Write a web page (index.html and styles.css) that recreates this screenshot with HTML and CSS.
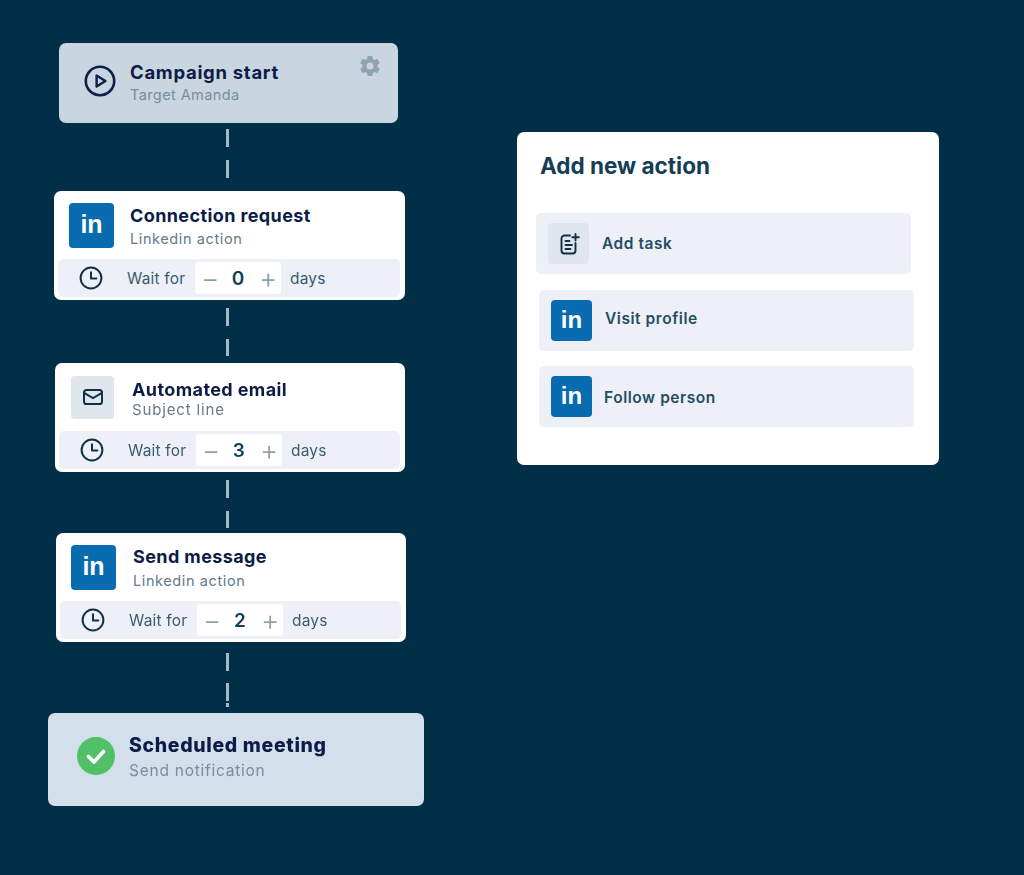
FILE: index.html
```html
<!DOCTYPE html>
<html lang="en">
<head>
<meta charset="utf-8">
<title>Campaign flow</title>
<link rel="stylesheet" href="styles.css">
</head>
<body>
<main class="canvas">
  <div class="dash dash-a"></div>
  <div class="dash dash-b"></div>
  <div class="dash dash-c"></div>
  <div class="dash dash-d"></div>

  <section class="node start">
    <svg class="play" viewBox="0 0 32 32"><circle cx="16" cy="16" r="14.2" fill="none" stroke="#0d1f4a" stroke-width="2.6"/><path d="M12.6 10.6 21.4 16l-8.8 5.4z" fill="none" stroke="#0d1f4a" stroke-width="2.4" stroke-linejoin="round"/></svg>
    <div class="text">
      <h2 class="title title-start">Campaign start</h2>
      <p class="sub sub-dim">Target Amanda</p>
    </div>
    <svg class="gear" viewBox="0 0 24 24"><path fill="#8ea3b1" d="M19.43 12.98c.04-.32.07-.64.07-.98s-.03-.66-.07-.98l2.11-1.65c.19-.15.24-.42.12-.64l-2-3.46c-.12-.22-.39-.3-.61-.22l-2.49 1c-.52-.4-1.08-.73-1.69-.98l-.38-2.65A.49.49 0 0 0 14 2h-4c-.25 0-.46.18-.49.42l-.38 2.65c-.61.25-1.17.59-1.69.98l-2.49-1c-.23-.09-.49 0-.61.22l-2 3.46c-.13.22-.07.49.12.64l2.11 1.65c-.04.32-.07.65-.07.98s.03.66.07.98l-2.11 1.65c-.19.15-.24.42-.12.64l2 3.46c.12.22.39.3.61.22l2.49-1c.52.4 1.08.73 1.69.98l.38 2.65c.03.24.24.42.49.42h4c.25 0 .46-.18.49-.42l.38-2.65c.61-.25 1.17-.59 1.69-.98l2.49 1c.23.09.49 0 .61-.22l2-3.46c.12-.22.07-.49-.12-.64l-2.11-1.65zM12 15.5a3.5 3.5 0 1 1 0-7 3.5 3.5 0 0 1 0 7z"/></svg>
  </section>

  <section class="node step step-a">
    <div class="head">
      <span class="in">in</span>
      <div class="text">
        <h2 class="title">Connection request</h2>
        <p class="sub">Linkedin action</p>
      </div>
    </div>
    <div class="wait">
      <svg class="clock" viewBox="0 0 24 24"><circle cx="12" cy="12" r="10.4" fill="none" stroke="#0f3146" stroke-width="2"/><path d="M12 6.2V12.4H17.4" fill="none" stroke="#0f3146" stroke-width="2" stroke-linecap="round" stroke-linejoin="round"/></svg>
      <span class="wait-label">Wait for</span>
      <div class="stepper"><span class="sign">−</span><b class="count">0</b><span class="sign">+</span></div>
      <span class="wait-days">days</span>
    </div>
  </section>

  <section class="node step step-b">
    <div class="head">
      <span class="box"><svg class="mail" viewBox="0 0 24 24"><rect x="3" y="5" width="18" height="14" rx="2.6" fill="none" stroke="#0f3146" stroke-width="2"/><path d="M3.5 8.2 12 13l8.500-4.800" fill="none" stroke="#0f3146" stroke-width="2"/></svg></span>
      <div class="text">
        <h2 class="title">Automated email</h2>
        <p class="sub sub-wide">Subject line</p>
      </div>
    </div>
    <div class="wait">
      <svg class="clock" viewBox="0 0 24 24"><circle cx="12" cy="12" r="10.4" fill="none" stroke="#0f3146" stroke-width="2"/><path d="M12 6.2V12.4H17.4" fill="none" stroke="#0f3146" stroke-width="2" stroke-linecap="round" stroke-linejoin="round"/></svg>
      <span class="wait-label">Wait for</span>
      <div class="stepper"><span class="sign">−</span><b class="count">3</b><span class="sign">+</span></div>
      <span class="wait-days">days</span>
    </div>
  </section>

  <section class="node step step-c">
    <div class="head">
      <span class="in">in</span>
      <div class="text">
        <h2 class="title">Send message</h2>
        <p class="sub">Linkedin action</p>
      </div>
    </div>
    <div class="wait">
      <svg class="clock" viewBox="0 0 24 24"><circle cx="12" cy="12" r="10.4" fill="none" stroke="#0f3146" stroke-width="2"/><path d="M12 6.2V12.4H17.4" fill="none" stroke="#0f3146" stroke-width="2" stroke-linecap="round" stroke-linejoin="round"/></svg>
      <span class="wait-label">Wait for</span>
      <div class="stepper"><span class="sign">−</span><b class="count">2</b><span class="sign">+</span></div>
      <span class="wait-days">days</span>
    </div>
  </section>

  <section class="node end">
    <svg class="check" viewBox="0 0 38 38"><circle cx="19" cy="19" r="19" fill="#52c068"/><path d="M11.500 19.500 17 25 26.500 14.500" fill="none" stroke="#fff" stroke-width="3.600" stroke-linecap="round" stroke-linejoin="round"/></svg>
    <div class="text">
      <h2 class="title title-lg">Scheduled meeting</h2>
      <p class="sub sub-lg">Send notification</p>
    </div>
  </section>

  <aside class="node panel">
    <h1 class="panel-title">Add new action</h1>
    <div class="row row-a">
      <span class="box box-task"><svg class="task" viewBox="0 0 24 24"><path d="M13 3.500H7.500a3 3 0 0 0-3 3v12a3 3 0 0 0 3 3h8a3 3 0 0 0 3-3V11" fill="none" stroke="#0f3146" stroke-width="1.900" stroke-linecap="round"/><path d="M8.500 9h4M8.500 13h6.500M8.500 17h5" fill="none" stroke="#0f3146" stroke-width="1.900" stroke-linecap="round"/><path d="M18.500 2v6.500M15.200 5.200h6.600" fill="none" stroke="#0f3146" stroke-width="1.900" stroke-linecap="round"/></svg></span>
      <span class="row-label">Add task</span>
    </div>
    <div class="row row-b">
      <span class="in in-sm">in</span>
      <span class="row-label">Visit profile</span>
    </div>
    <div class="row row-c">
      <span class="in in-sm">in</span>
      <span class="row-label row-label-tight">Follow person</span>
    </div>
  </aside>
</main>
</body>
</html>
```
FILE: styles.css
```css
* { box-sizing: border-box; margin: 0; padding: 0; }

html, body { width: 1024px; height: 875px; overflow: hidden; }

body {
  background: #012f47;
  font-family: "Inter", "Noto Sans", sans-serif;
}

.canvas { position: relative; width: 1024px; height: 875px; filter: blur(0.5px); }

.dash {
  position: absolute;
  left: 226px;
  width: 2.500px;
  background: repeating-linear-gradient(to bottom, #a9b7c1 0 18px, transparent 18px 31px);
}
.dash-a { top: 129px; height: 49px; }
.dash-b { top: 308px; height: 48px; }
.dash-c { top: 480px; height: 48px; }
.dash-d {
  top: 653px; height: 54px;
  background: linear-gradient(to bottom, #a9b7c1 0 18px, transparent 18px 30px, #a9b7c1 30px 48px, transparent 48px 50px, #a9b7c1 50px 54px);
}

.node { position: absolute; border-radius: 7px; }

.start {
  left: 59px; top: 43px; width: 339px; height: 80px;
  background: #c9d6df;
  display: flex;
  align-items: center;
  padding-left: 25px;
  gap: 14px;
}
.play { width: 32px; height: 32px; flex: none; margin-bottom: 5px; }
.gear { position: absolute; top: 11px; right: 16px; width: 24px; height: 24px; }

.text { display: flex; flex-direction: column; gap: 4px; }
.start .text { gap: 3px; margin-bottom: 2px; }

.title {
  font-size: 18px;
  line-height: 22px;
  font-weight: 700;
  color: #0c1c47;
  letter-spacing: 0.4px;
  white-space: nowrap;
}
.title-start { font-size: 18.500px; letter-spacing: 0.7px; }
.title-lg { font-size: 19.500px; font-weight: 800; letter-spacing: 0.65px; }

.sub {
  font-size: 14.500px;
  line-height: 18px;
  font-weight: 400;
  color: #64798a;
  letter-spacing: 0.6px;
  white-space: nowrap;
}
.sub-dim { color: #788d9c; letter-spacing: 0.4px; }
.sub-lg { color: #788d9c; font-size: 15.500px; letter-spacing: 0.75px; }
.sub-wide { font-size: 15px; letter-spacing: 0.85px; }

.step {
  width: 351px; height: 109px;
  background: #fff;
  padding: 12px 5px 3px 4px;
  display: flex;
  flex-direction: column;
  justify-content: space-between;
}
.step-a { left: 54px; top: 191px; }
.step-b { left: 55px; top: 363px; width: 350px; }
.step-c { left: 56px; top: 533px; width: 350px; }

.head { display: flex; align-items: center; gap: 16px; padding-left: 11px; }
.step-a .text { gap: 3px; margin-top: 1px; }
.step-b .head { gap: 18px; }
.step-b .text { gap: 0; margin-top: 4px; }
.step-c .head { gap: 17px; }

.in {
  width: 45px; height: 45px;
  flex: none;
  display: flex;
  align-items: center;
  justify-content: center;
  padding-bottom: 2px;
  background: #0a6cb0;
  border-radius: 4px;
  color: #fff;
  font-family: "Liberation Sans", sans-serif;
  font-size: 25px;
  font-weight: 700;
}
.in-sm { width: 41px; height: 41px; font-size: 24px; }

.box {
  width: 43px; height: 43px;
  flex: none;
  display: flex;
  align-items: center;
  justify-content: center;
  background: #dfe6ed;
  border-radius: 4px;
}
.step-b .box { margin-left: 1px; }
.mail { width: 24px; height: 24px; }
.task { width: 24px; height: 24px; }

.wait {
  height: 38px;
  display: flex;
  align-items: center;
  background: #edf1f7;
  border-radius: 5px;
  padding-left: 21px;
  color: #3b5a6d;
  font-size: 15.500px;
  letter-spacing: 0.2px;
}
.clock { width: 24px; height: 24px; flex: none; }
.wait-label { margin-left: 24px; width: 68px; white-space: nowrap; }
.wait-days { margin-left: 9px; }

.stepper {
  width: 86px; height: 32px;
  display: flex;
  align-items: center;
  justify-content: space-between;
  padding: 0 6px;
  background: #fff;
  border-radius: 3px;
}
.sign { color: #8fa1ad; font-size: 28px; font-weight: 300; line-height: 1; width: 16px; text-align: center; }
.count { color: #0f3f57; font-size: 19px; font-weight: 600; }

.end {
  left: 48px; top: 713px; width: 376px; height: 93px;
  background: #d3dfea;
  display: flex;
  align-items: center;
  padding-left: 29px;
  gap: 14px;
}
.check { width: 38px; height: 38px; flex: none; margin-bottom: 8px; }
.end .text { gap: 6px; margin-bottom: 5px; }

.panel {
  left: 517px; top: 132px; width: 422px; height: 333px;
  background: #fff;
}
.panel-title {
  position: absolute;
  left: 23px; top: 19px;
  font-size: 22.500px;
  line-height: 30px;
  font-weight: 700;
  color: #153e55;
  white-space: nowrap;
}

.row {
  position: absolute;
  width: 375px; height: 61px;
  display: flex;
  align-items: center;
  padding-left: 12px;
  background: #edf1f7;
  border-radius: 5px;
}
.row-a { left: 19px; top: 81px; }
.row-b { left: 22px; top: 158px; }
.row-c { left: 22px; top: 234px; }
.box-task { width: 41px; height: 41px; }

.row-label {
  margin-left: 13px;
  font-size: 15.500px;
  font-weight: 600;
  letter-spacing: 0.55px;
  color: #274c61;
  white-space: nowrap;
}
.row-b .row-label { margin-top: -5px; }
.row-c .row-label { margin-top: 1px; }
.row-label-tight { margin-left: 12px; }
```
